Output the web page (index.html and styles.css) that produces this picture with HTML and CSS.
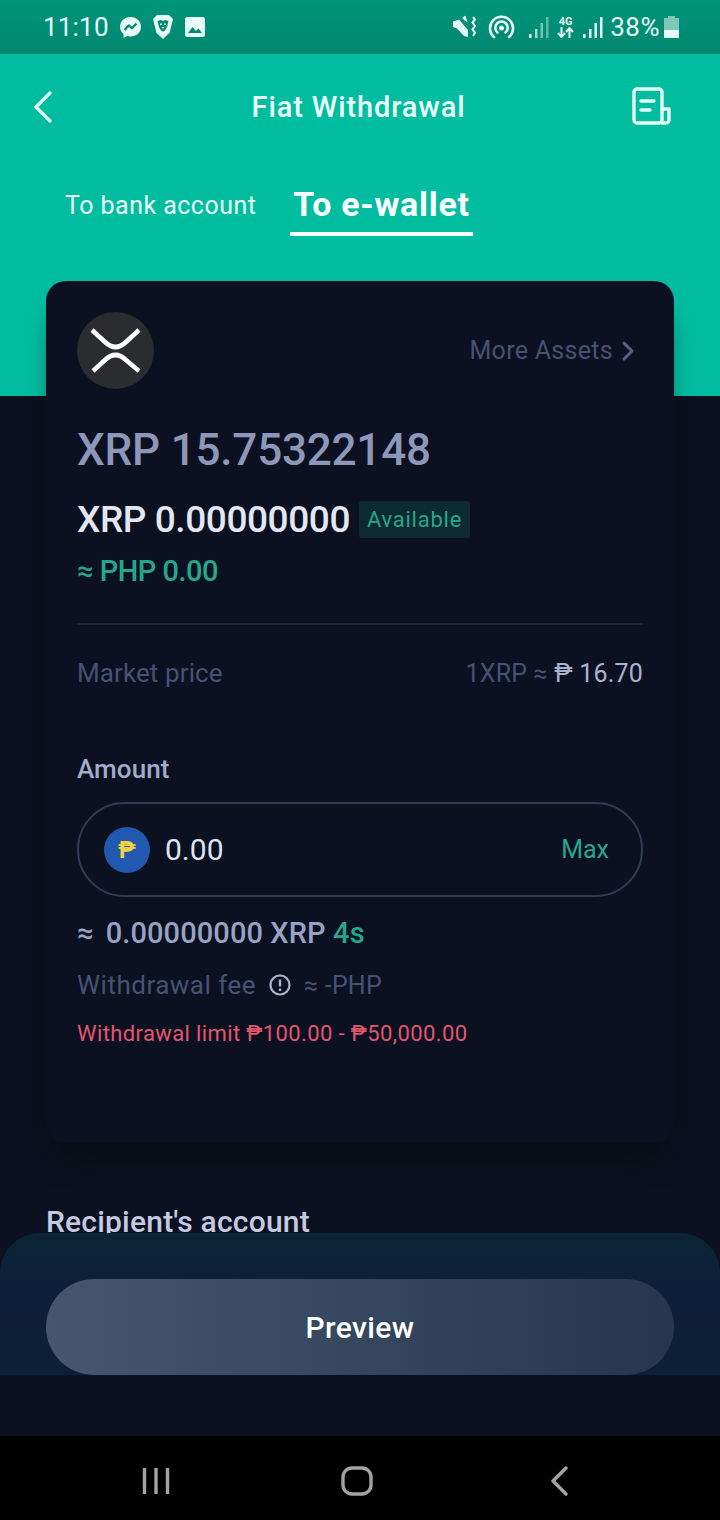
FILE: index.html
```html
<!DOCTYPE html>
<html lang="en">
<head>
<meta charset="utf-8">
<title>Fiat Withdrawal</title>
<link rel="stylesheet" href="styles.css">
</head>
<body>
<div class="app">
  <div class="status">
    <div class="status-group">
      <span class="time">11:10</span>
      <svg class="ic-msg" width="23" height="23" viewBox="0 0 23 23"><path fill="#e6fbf6" d="M11.500 1C5.500 1 1 5.300 1 10.800c0 3 1.300 5.500 3.500 7.300V22l3.500-2c1.100.3 2.300.5 3.500.5 6 0 10.500-4.200 10.500-9.700S17.500 1 11.500 1z"/><path fill="none" stroke="#00896f" stroke-width="2.200" stroke-linejoin="round" d="M5.500 14l4.200-4.600 3.200 2.800 4.600-4.600"/></svg>
      <svg class="ic-brave" width="22" height="26" viewBox="0 0 22 26"><path fill="#e6fbf6" d="M5 1h12l4 4-1 4-2.500 10-6.500 6-6.500-6L2 9 1 5z"/><path fill="#00896f" d="M5.500 7l3.500-1 2 1 2-1 3.500 1-1.500 6-2 3.500-2 1-2-1-2-3.500z"/><path fill="#e6fbf6" d="M9.500 13h3l-1.500 2zM8 9.500h2v1.500H8zM12 9.500h2v1.500h-2z"/></svg>
      <svg class="ic-img" width="20" height="20" viewBox="0 0 20 20"><rect width="20" height="20" rx="2.500" fill="#e6fbf6"/><path fill="#00896f" d="M3 16l4.500-6 3.500 4 2.500-2.500L17 16z"/></svg>
    </div>
    <div class="status-group">
      <svg class="ic-mute" width="24" height="24" viewBox="0 0 24 24"><path fill="#e6fbf6" d="M0 6.500L6 4.500 15 15v7l-4-1L4 13.500 0 12z"/><path fill="#e6fbf6" d="M9 3l3.500-2.500 2 7z"/><path fill="none" stroke="#e6fbf6" stroke-width="2" d="M20 2l2 2.500-2.500 3 2.500 3.500-2.500 3.500 2.500 3-2 3.500"/></svg>
      <svg class="ic-hot" width="27" height="24" viewBox="0 0 27 24"><g fill="none" stroke="#e6fbf6" stroke-width="2.600" stroke-linecap="round"><path d="M6 22a11.500 11.500 0 1 1 15 0"/><path d="M9.500 17.500a6.200 6.200 0 1 1 8 0"/></g><circle cx="13.500" cy="13" r="2.500" fill="#e6fbf6"/></svg>
      <svg class="ic-sig dim" width="20" height="22" viewBox="0 0 20 22"><rect x="0" y="18" width="2.500" height="4" fill="#e6fbf6"/><rect x="6" y="13" width="2.500" height="9" fill="#e6fbf6" opacity=".7"/><rect x="11.500" y="7" width="2.500" height="15" fill="#e6fbf6" opacity=".5"/><rect x="17" y="1" width="2.500" height="21" fill="#e6fbf6" opacity=".4"/></svg>
      <div class="net"><span class="net-label">4G</span><svg width="17" height="11" viewBox="0 0 17 11"><path fill="none" stroke="#e6fbf6" stroke-width="2" d="M4.500 0v9M1 6l3.500 4L8 6M12.500 11V2M9 5l3.500-4L16 5"/></svg></div>
      <svg class="ic-sig" width="20" height="22" viewBox="0 0 20 22"><rect x="0" y="18" width="2.500" height="4" fill="#e6fbf6"/><rect x="6" y="13" width="2.500" height="9" fill="#e6fbf6"/><rect x="11.500" y="7" width="2.500" height="15" fill="#e6fbf6"/><rect x="17" y="1" width="2.500" height="21" fill="#e6fbf6"/></svg>
      <span class="batt-text">38%</span>
      <svg class="ic-batt" width="15" height="22" viewBox="0 0 15 22"><path fill="#7fc8b8" d="M4 0h7v2h4v20H0V2h4z"/><rect y="14" width="15" height="8" fill="#e6fbf6"/></svg>
    </div>
  </div>

  <div class="main">
    <div class="hero">
      <div class="topbar">
        <svg class="back" width="20" height="32" viewBox="0 0 20 32"><path fill="none" stroke="#e6fbf6" stroke-width="3.200" stroke-linecap="round" stroke-linejoin="round" d="M17 2L3 16l14 14"/></svg>
        <h1 class="title">Fiat Withdrawal</h1>
        <svg class="doc" width="40" height="40" viewBox="0 0 40 40"><g fill="none" stroke="#e6fbf6" stroke-width="3.400" stroke-linejoin="round" stroke-linecap="round"><rect x="2" y="2" width="28" height="34" rx="3"/><path d="M30 22h7v11a3 3 0 0 1-3 3h-4"/><path d="M9 14h13M9 23h9"/></g></svg>
      </div>
      <div class="tabs">
        <span class="tab">To bank account</span>
        <span class="tab tab-active">To e-wallet</span>
      </div>
    </div>

    <section class="card">
      <div class="asset-row">
        <svg class="xrp" width="77" height="77" viewBox="0 0 77 77"><circle cx="38.500" cy="38.500" r="38.500" fill="#2b2c30"/><g fill="none" stroke="#fff" stroke-width="4.600"><path d="M15 18l13 12q10.500 10 21 0l13-12"/><path d="M16 59l12-11q10.500-10 21 0l13 11"/></g></svg>
        <span class="more">More Assets<svg width="14" height="22" viewBox="0 0 14 22"><path fill="none" stroke="#56628c" stroke-width="3" stroke-linecap="round" stroke-linejoin="round" d="M3 3l8 8-8 8"/></svg></span>
      </div>
      <div class="balance">XRP 15.75322148</div>
      <div class="avail-row">
        <span class="avail-value">XRP 0.00000000</span>
        <span class="badge">Available</span>
      </div>
      <div class="php">≈ PHP 0.00</div>
      <div class="divider"></div>
      <div class="market">
        <span class="market-label">Market price</span>
        <span class="market-rate">1XRP ≈ <span class="market-value">₱ 16.70</span></span>
      </div>
      <div class="amount-label">Amount</div>
      <div class="input">
        <span class="coin">₱</span>
        <span class="input-value">0.00</span>
        <span class="max">Max</span>
      </div>
      <div class="approx"><span class="approx-sign">≈</span>0.00000000 XRP <span class="secs">4s</span></div>
      <div class="fee">
        <span>Withdrawal fee</span>
        <svg width="22" height="22" viewBox="0 0 22 22"><circle cx="11" cy="11" r="9.500" fill="none" stroke="#a9b3d0" stroke-width="2.200"/><path d="M11 5.500v7" stroke="#a9b3d0" stroke-width="2.400"/><circle cx="11" cy="15.800" r="1.400" fill="#a9b3d0"/></svg>
        <span class="fee-value">≈ -PHP</span>
      </div>
      <div class="limit">Withdrawal limit ₱100.00 - ₱50,000.00</div>
    </section>

    <h2 class="recipient">Recipient's account</h2>

    <div class="sheet">
      <button class="preview">Preview</button>
    </div>
  </div>

  <div class="nav">
    <svg width="28" height="28" viewBox="0 0 28 28"><path stroke="#a3a3a3" stroke-width="3.400" d="M2.500 1v26M14 1v26M25.500 1v26"/></svg>
    <svg class="nav-home" width="32" height="30" viewBox="0 0 32 30"><rect x="2" y="2" width="28" height="26" rx="9" fill="none" stroke="#a3a3a3" stroke-width="3.400"/></svg>
    <svg width="18" height="30" viewBox="0 0 18 30"><path fill="none" stroke="#a3a3a3" stroke-width="3.400" stroke-linecap="round" stroke-linejoin="round" d="M16 2L3 15l13 13"/></svg>
  </div>
</div>
</body>
</html>
```

FILE: styles.css
```css
* { box-sizing: border-box; }
html, body { margin: 0; padding: 0; }
body { font-family: Roboto, "Noto Sans", sans-serif; background: #0b1120; }

.app {
  width: 720px;
  height: 1520px;
  display: flex;
  flex-direction: column;
  overflow: hidden;
}

.status {
  height: 54px;
  flex: none;
  display: flex;
  align-items: center;
  justify-content: space-between;
  padding: 0 41px 0 43px;
  background: linear-gradient(180deg, #00957c, #00876f);
  color: #e6fbf6;
}
.status-group { display: flex; align-items: center; }
.time { font-size: 26px; letter-spacing: 0.2px; margin-right: 10px; }
.ic-brave { margin-left: 10px; }
.ic-img { margin-left: 11px; }
.ic-hot { margin-left: 11px; }
.ic-sig.dim { margin-left: 14px; }
.net { display: flex; flex-direction: column; align-items: center; margin: 0 9px 0 8px; }
.net-label { font-size: 11px; line-height: 11px; font-weight: 700; }
.batt-text { font-size: 26px; margin-left: 7px; letter-spacing: 0.5px; }
.ic-batt { margin-left: 4px; }

.main { flex: 1; position: relative; overflow: hidden; background: #0b1120; }

.hero { height: 342px; background: #00bda0; padding: 0 48px 0 33px; color: #eafdf8; }
.topbar { height: 106px; display: flex; align-items: center; justify-content: space-between; }
.back { margin-right: 32px; }
.title { margin: 0; font-size: 29px; font-weight: 500; letter-spacing: 0.87px; }
.tabs { display: flex; align-items: flex-start; margin-left: 32px; margin-top: 23px; }
.tab { font-size: 25px; line-height: 46px; letter-spacing: 0.47px; }
.tab-active {
  font-size: 34px;
  font-weight: 700;
  letter-spacing: 0.7px;
  margin-left: 34px;
  padding: 0 3px 7px;
  color: #fff;
  border-bottom: 4px solid #fff;
  line-height: 42px;
}

.card {
  position: relative;
  width: 628px;
  margin: -115px 0 0 46px;
  padding: 31px 31px 95px;
  background: #0b1120;
  border-radius: 20px;
  box-shadow: 0 26px 30px -14px rgba(8, 12, 14, 0.9);
}
.asset-row { display: flex; justify-content: space-between; align-items: center; height: 77px; padding-right: 8px; }
.more { display: flex; align-items: center; gap: 8px; font-size: 25px; letter-spacing: 0.3px; color: #465275; }
.balance { margin-top: 36px; font-size: 44px; line-height: 50px; font-weight: 500; color: #8d97ba; letter-spacing: -0.2px; }
.avail-row { margin-top: 24px; height: 40px; display: flex; align-items: center; }
.avail-value { font-size: 37px; font-weight: 500; color: #e3e7f3; letter-spacing: -0.43px; }
.badge { margin-left: 9px; height: 37px; padding: 0 8px; display: flex; align-items: center; border-radius: 3px; background: #0c2a30; color: #23a88c; font-size: 22px; letter-spacing: 0.75px; }
.php { margin-top: 14px; font-size: 29px; line-height: 36px; font-weight: 500; letter-spacing: -0.5px; color: #23a88c; }
.divider { margin-top: 34px; height: 2px; background: #1e2433; }
.market { margin-top: 30px; height: 36px; display: flex; justify-content: space-between; align-items: center; color: #465275; }
.market-label { font-size: 26px; letter-spacing: 0.1px; }
.market-rate { font-size: 25px; letter-spacing: 0.2px; }
.market-value { color: #a9b3d0; }
.amount-label { margin-top: 61px; font-size: 26px; line-height: 34px; font-weight: 500; letter-spacing: 0.1px; color: #a2acca; }
.input { margin-top: 16px; height: 95px; display: flex; align-items: center; padding: 0 32px 0 25px; border: 2px solid #323b55; border-radius: 48px; }
.coin { width: 46px; height: 46px; border-radius: 50%; background: #2158b0; color: #f5d33c; font-size: 24px; font-weight: 700; display: flex; align-items: center; justify-content: center; }
.input-value { margin-left: 15px; flex: 1; font-size: 30px; color: #dfe4f2; }
.max { font-size: 25px; color: #23a88c; }
.approx { margin-top: 18px; font-size: 29px; line-height: 36px; font-weight: 500; letter-spacing: 0.1px; color: #98a2c4; }
.approx-sign { margin-right: 12px; }
.secs { color: #23a88c; }
.fee { margin-top: 17px; height: 34px; display: flex; align-items: center; gap: 13px; font-size: 26px; letter-spacing: 0.5px; color: #465275; }
.fee-value { font-size: 25px; letter-spacing: 0.2px; }
.limit { margin-top: 18px; font-size: 22px; line-height: 28px; letter-spacing: 0.38px; color: #e2566f; }

.recipient { margin: 59px 0 0 46px; font-size: 30px; line-height: 40px; font-weight: 500; letter-spacing: 0.2px; color: #c4cae0; }

.sheet {
  position: absolute;
  left: 0;
  right: 0;
  bottom: 61px;
  height: 142px;
  padding: 46px 46px 0;
  border-radius: 40px 40px 0 0;
  background: linear-gradient(180deg, #0b2437, #0d2039 40%, #0b2036);
}
.preview {
  display: block;
  width: 100%;
  height: 96px;
  border: 0;
  border-radius: 48px;
  background: linear-gradient(90deg, #45566f, #25364f);
  color: #fff;
  font-family: inherit;
  font-size: 30px;
  font-weight: 500;
  letter-spacing: 0.4px;
}

.nav {
  height: 84px;
  flex: none;
  background: #000;
  display: flex;
  align-items: center;
  padding: 6px 152px 0 142px;
  justify-content: space-between;
}
.nav-home { margin-right: 6px; }
```
